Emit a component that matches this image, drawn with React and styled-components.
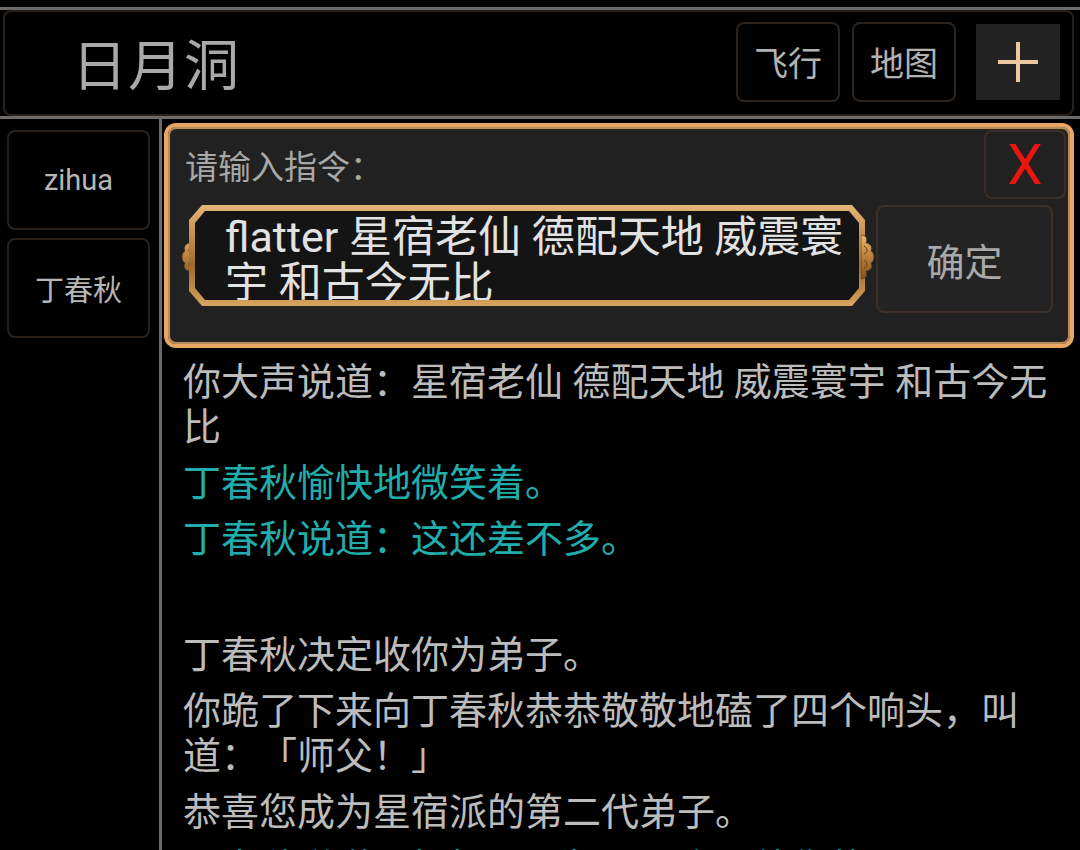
import React from 'react'
import styled, { createGlobalStyle } from 'styled-components'

const GlobalStyle = createGlobalStyle`
    html, body {
        margin: 0;
        padding: 0;
        background: #000;
        overflow: hidden;
    }
    body {
        font-family: Roboto, "Noto Sans CJK SC", sans-serif;
        text-spacing-trim: space-all;
    }
`

const log = [
    { text: '你大声说道：星宿老仙 德配天地 威震寰宇 和古今无比' },
    { text: '丁春秋愉快地微笑着。', tone: 'npc' },
    { text: '丁春秋说道：这还差不多。', tone: 'npc' },
    { text: '' },
    { text: '丁春秋决定收你为弟子。' },
    { text: '你跪了下来向丁春秋恭恭敬敬地磕了四个响头，叫道：「师父！」' },
    { text: '恭喜您成为星宿派的第二代弟子。' },
    { text: '丁春秋说道：好好干，师父不会亏待你的。', tone: 'npc' },
]

function Scroll({ side }) {
    return (
        <Ornament side={side} viewBox="0 0 14 46" width="14" height="46">
            <defs>
                <linearGradient id={`gold-${side}`} x1="0" y1="0" x2="0" y2="1">
                    <stop offset="0" stopColor="#e9b86c" />
                    <stop offset="0.5" stopColor="#b8803c" />
                    <stop offset="1" stopColor="#7e5220" />
                </linearGradient>
            </defs>
            <path
                d="M14 1 C9 1 7 5 9 9 C5 9 2 13 4 17 C0 19 0 27 4 29 C2 33 4 37 9 37 C7 41 9 45 14 45 Z"
                fill={`url(#gold-${side})`}
                stroke="#4e3414"
                strokeWidth="0.7"
            />
            <path d="M11 12 C7 14 7 19 11 20 M11 26 C7 28 7 33 11 34" fill="none" stroke="#5e3e16" strokeWidth="1" />
        </Ornament>
    )
}

function App() {
    return (
        <Page>
            <GlobalStyle />
            <TopBar>
                <HeaderBox>
                    <Title>日月洞</Title>
                    <Spacer />
                    <NavButton>飞行</NavButton>
                    <NavButton>地图</NavButton>
                    <PlusBox>
                        <svg width="44" height="44" viewBox="0 0 44 44">
                            <path d="M22 2 V42 M2 22 H42" stroke="#ecc8a0" strokeWidth="4" />
                        </svg>
                    </PlusBox>
                </HeaderBox>
            </TopBar>
            <Body>
                <Sidebar>
                    <SideButton>zihua</SideButton>
                    <SideButton>丁春秋</SideButton>
                </Sidebar>
                <Main>
                    <Dialog>
                        <HeadRow>
                            <Label>请输入指令：</Label>
                            <CloseButton>X</CloseButton>
                        </HeadRow>
                        <InputRow>
                            <InputFrame>
                                <Scroll side="left" />
                                <Bezel>
                                    <BezelInner>
                                        <Command>flatter 星宿老仙 德配天地 威震寰宇 和古今无比</Command>
                                    </BezelInner>
                                </Bezel>
                                <Scroll side="right" />
                            </InputFrame>
                            <ConfirmButton>确定</ConfirmButton>
                        </InputRow>
                    </Dialog>
                    <Log>
                        {log.map((line, i) => (
                            <Line key={i} tone={line.tone} blank={!line.text}>
                                {line.text}
                            </Line>
                        ))}
                    </Log>
                </Main>
            </Body>
        </Page>
    )
}

export default App

const Page = styled.div`
    width: 1080px;
    height: 850px;
    overflow: hidden;
    padding-top: 7px;
    box-sizing: border-box;
    background: #000;
    display: flex;
    flex-direction: column;
`

const TopBar = styled.div`
    border-top: 3px solid #6b6b6b;
    border-bottom: 3px solid #6b6b6b;
    padding: 0 6px 0 3px;
`

const HeaderBox = styled.div`
    height: 106px;
    box-sizing: border-box;
    border: 2px solid #2a201a;
    border-radius: 8px;
    display: flex;
    align-items: center;
    padding: 0 12px 3px 67px;
`

const Title = styled.div`
    font-size: 55px;
    color: #a9a9a9;
    letter-spacing: 1px;
    margin-top: -2px;
`

const Spacer = styled.div`
    flex: 1;
`

const NavButton = styled.div`
    width: 104px;
    height: 80px;
    box-sizing: border-box;
    border: 2px solid #2d231d;
    border-radius: 8px;
    margin-right: 12px;
    display: flex;
    align-items: center;
    justify-content: center;
    font-size: 34px;
    color: #b2b2b2;
`

const PlusBox = styled.div`
    width: 84px;
    height: 76px;
    margin-left: 8px;
    background: #222;
    display: flex;
    align-items: center;
    justify-content: center;
`

const Body = styled.div`
    flex: 1;
    display: flex;
    min-height: 0;
`

const Sidebar = styled.div`
    width: 162px;
    flex-shrink: 0;
    box-sizing: border-box;
    border-right: 3px solid #6a6a6a;
    padding: 11px 9px 0 7px;
    display: flex;
    flex-direction: column;
    gap: 8px;
`

const SideButton = styled.div`
    height: 100px;
    box-sizing: border-box;
    border: 2px solid #2a201a;
    border-radius: 8px;
    display: flex;
    align-items: center;
    justify-content: center;
    font-size: 29px;
    color: #b6b6b6;
`

const Main = styled.div`
    flex: 1;
    padding: 4px 6px 0 2px;
    min-width: 0;
`

const Dialog = styled.div`
    height: 225px;
    box-sizing: border-box;
    border: 4px solid #e8a664;
    border-radius: 12px;
    box-shadow: inset 0 0 0 2px #b48b5b, inset 0 0 0 3px #2e241c;
    background: #212121;
    padding: 0 4px 0 0;
`

const HeadRow = styled.div`
    height: 77px;
    display: flex;
    justify-content: space-between;
    align-items: flex-start;
`

const Label = styled.div`
    padding: 20px 0 0 17px;
    font-size: 33px;
    line-height: 42px;
    color: #a8a8a8;
`

const CloseButton = styled.div`
    width: 82px;
    height: 69px;
    margin-top: 3px;
    box-sizing: border-box;
    border: 2px solid #3a2e26;
    border-radius: 8px;
    display: flex;
    align-items: center;
    justify-content: center;
    font-family: Roboto, sans-serif;
    font-size: 56px;
    color: #ea1410;
`

const InputRow = styled.div`
    display: flex;
    align-items: flex-start;
    padding: 1px 0 0 14px;
    gap: 2px;
`

const InputFrame = styled.div`
    position: relative;
    width: 692px;
    height: 101px;
    padding: 0 9px 0 7px;
    box-sizing: border-box;
`

const Ornament = styled.svg`
    position: absolute;
    top: 29px;
    ${(p) => (p.side === 'left' ? 'left: -1px;' : 'right: -1px; transform: scaleX(-1);')}
`

const chamfer = (x, y) => `polygon(
    ${x}px 0, calc(100% - ${x}px) 0, 100% ${y}px, 100% calc(100% - ${y}px),
    calc(100% - ${x}px) 100%, ${x}px 100%, 0 calc(100% - ${y}px), 0 ${y}px
)`

const Bezel = styled.div`
    height: 100%;
    box-sizing: border-box;
    padding: 6px;
    background: linear-gradient(180deg, #e6b676 0%, #b27c3c 45%, #9c6a2e 60%, #d8a45e 100%);
    clip-path: ${chamfer(13, 15)};
`

const BezelInner = styled.div`
    height: 100%;
    background: #141414;
    clip-path: ${chamfer(10, 12)};
    overflow: hidden;
`

const Command = styled.div`
    width: 652px;
    padding: 3px 0 0 30px;
    font-size: 43px;
    line-height: 46px;
    color: #e2e2e2;
`

const ConfirmButton = styled.div`
    width: 177px;
    height: 108px;
    box-sizing: border-box;
    border: 2px solid #3b2f27;
    border-radius: 8px;
    background: #232323;
    display: flex;
    align-items: center;
    justify-content: center;
    font-size: 38px;
    color: #a9a9a9;
`

const Log = styled.div`
    width: 868px;
    padding: 12px 0 0 19px;
`

const Line = styled.div`
    font-size: 38px;
    line-height: 45px;
    margin-bottom: 11px;
    color: ${(p) => (p.tone === 'npc' ? '#22adad' : '#bcbcbc')};
    min-height: ${(p) => (p.blank ? '49px' : '0')};
`
